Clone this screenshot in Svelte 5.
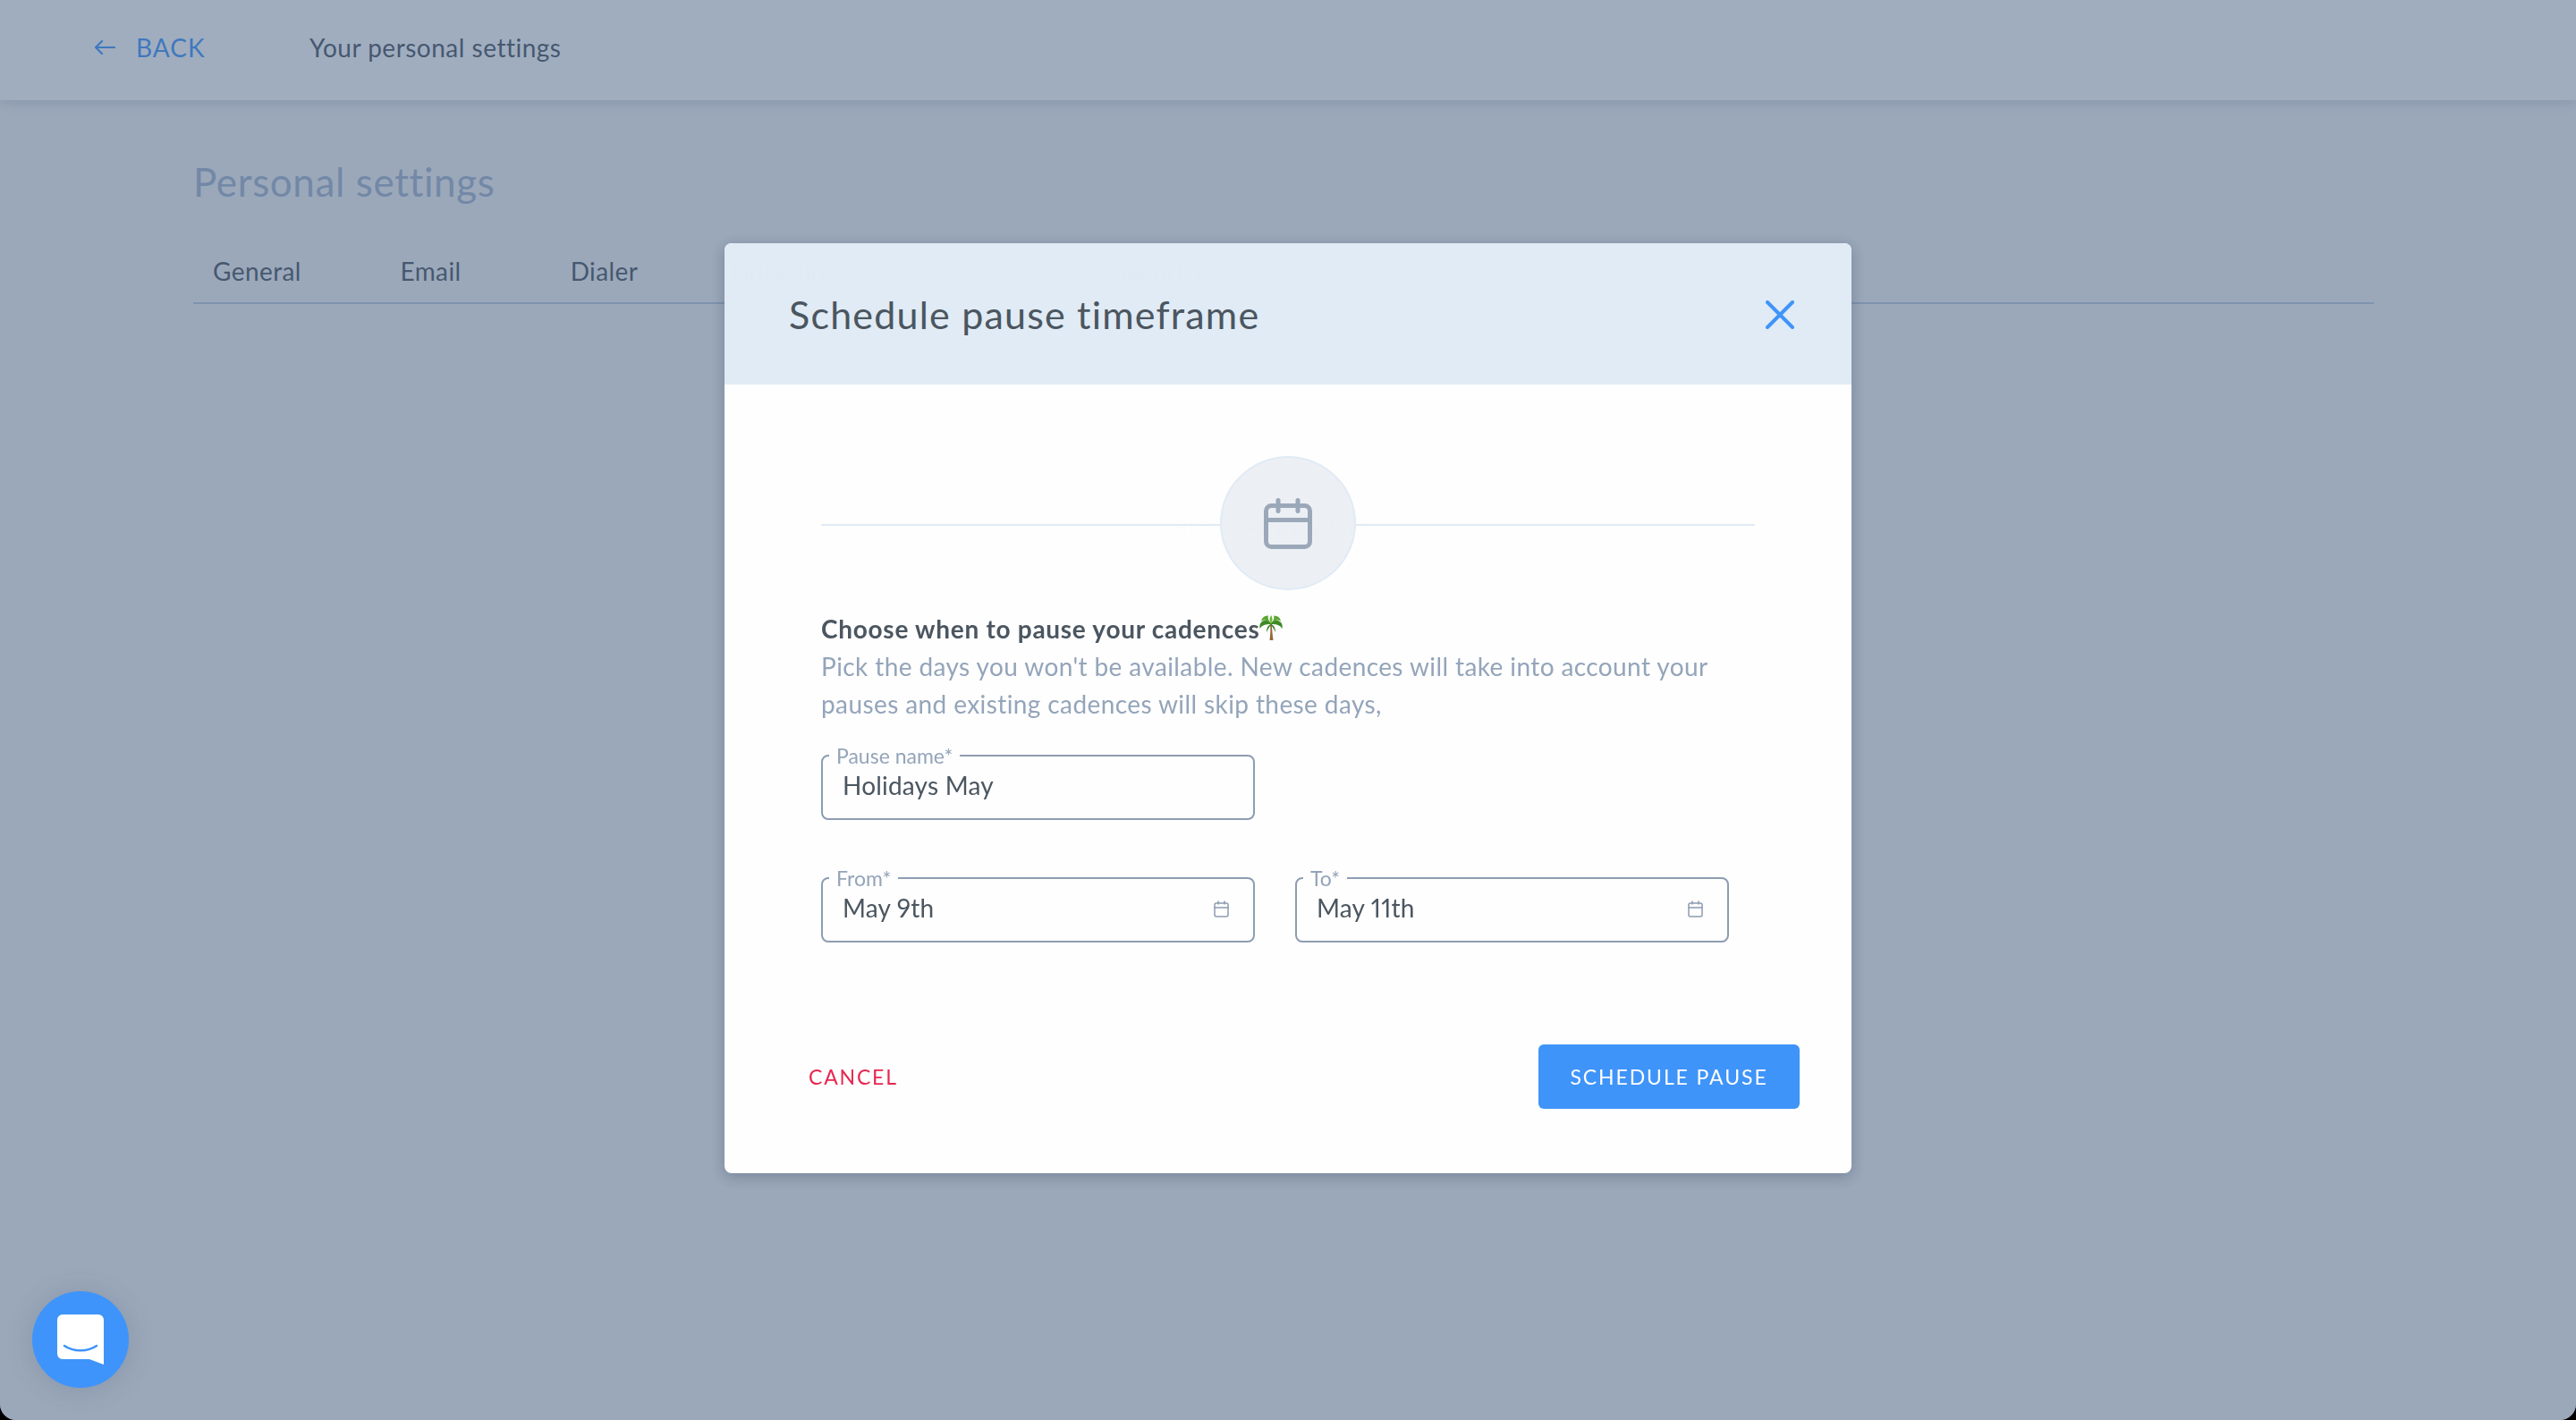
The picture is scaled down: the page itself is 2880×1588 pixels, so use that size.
<script>
  const tabs = ['General', 'Email', 'Dialer', 'Linkedin'];
</script>

<div class="page">
  <header class="topbar">
    <a class="back" href="#back">
      <svg class="back-arrow" viewBox="0 0 24 18" width="24" height="18" fill="none" stroke="currentColor" stroke-width="2.2" stroke-linecap="round" stroke-linejoin="round">
        <path d="M23 9H2M9 2 2 9l7 7" />
      </svg>
      BACK
    </a>
    <span class="crumb">Your personal settings</span>
  </header>

  <main class="content">
    <h1>Personal settings</h1>
    <nav class="tabs">
      {#each tabs as tab}
        <span class="tab">{tab}</span>
      {/each}
      <span class="tab security">Security</span>
    </nav>
    <div class="past">HIDE PAST PAUSES</div>
  </main>

  <div class="overlay">
    <section class="modal">
      <div class="modal-head">
        <h2>Schedule pause timeframe</h2>
        <svg class="close" viewBox="0 0 32 32" width="32" height="32" fill="none" stroke="#3e94fa" stroke-width="4" stroke-linecap="round">
          <path d="M2 2l28 28M30 2 2 30" />
        </svg>
      </div>

      <div class="modal-body">
        <div class="divider">
          <span class="rule"></span>
          <span class="badge">
            <svg viewBox="0 0 54 57" width="54" height="57" fill="none" stroke="#9ba8ba" stroke-width="5" stroke-linecap="round" stroke-linejoin="round">
              <rect x="2.5" y="8.5" width="49" height="46" rx="6" />
              <path d="M2.5 24.5h49M16 2.5v12M38 2.5v12" />
            </svg>
          </span>
          <span class="rule"></span>
        </div>

        <p class="lead">Choose when to pause your cadences<svg class="palm" viewBox="0 0 26 28" width="26" height="28">
            <path d="M12 9c.6 6 .4 12-.5 19h4c-1-7-1.500-13-1.500-19z" fill="#94683a" />
            <path d="M13 9C10 5 5 5 2 8c-1.500 1.500-2 4-1.500 7C3 11 7 10 13 10z" fill="#3f8a25" />
            <path d="M13 9c3-4 8-4 11-1 1.500 1.500 2 4 1.500 7C23 11 19 10 13 10z" fill="#3f8a25" />
            <path d="M13 9C10 6 9 3 10 .5c-4 0-7 2-8 6 4-2 7-1 11 3z" fill="#5aa630" />
            <path d="M13 9c3-3 4-6 3-8.500 4 0 7 2 8 6-4-2-7-1-11 3z" fill="#5aa630" />
            <path d="M13 10c-3 1-5 4-5 9 2-4 3-6 5-8 2 2 3 4 5 8 0-5-2-8-5-9z" fill="#2f7a1f" />
            <path d="M13 9c-2-3-2-6 0-9 2 3 2 6 0 9z" fill="#6cb93a" />
          </svg></p>
        <p class="hint">Pick the days you won't be available. New cadences will take into account your pauses and existing cadences will skip these days,</p>

        <fieldset class="field name">
          <legend>Pause name*</legend>
          <span class="value">Holidays May</span>
        </fieldset>

        <div class="dates">
          <fieldset class="field">
            <legend>From*</legend>
            <span class="value">May 9th</span>
            {@render cal()}
          </fieldset>
          <fieldset class="field">
            <legend>To*</legend>
            <span class="value">May 11th</span>
            {@render cal()}
          </fieldset>
        </div>

        <div class="actions">
          <button class="cancel">CANCEL</button>
          <button class="submit">SCHEDULE PAUSE</button>
        </div>
      </div>
    </section>
  </div>

  <button class="chat" aria-label="Chat">
    <svg viewBox="0 0 52 56" width="52" height="56">
      <path d="M6 0h40a6 6 0 0 1 6 6v50l-16-6H6a6 6 0 0 1-6-6V6a6 6 0 0 1 6-6z" fill="#fff" />
      <path d="M8 35c10 7 26 7 36 0" fill="none" stroke="#3e94fa" stroke-width="2.600" stroke-linecap="round" />
    </svg>
  </button>
</div>

{#snippet cal()}
  <svg class="cal" viewBox="0 0 17 19" width="17" height="19" fill="none" stroke="#8d9db3" stroke-width="1.500" stroke-linecap="round">
    <rect x="1" y="3" width="15" height="15" rx="2" />
    <path d="M1 8h15M5 1v3M12 1v3" />
  </svg>
{/snippet}

<style>
  :global(body) {
    margin: 0;
    background: #000;
    font-family: Lato, "Open Sans", sans-serif;
    font-variant-numeric: proportional-nums;
  }

  .page {
    position: relative;
    height: 1588px;
    overflow: hidden;
    background: #f5f5f5;
    border-radius: 0 0 18px 18px;
    color: #4a5560;
  }

  .topbar {
    display: flex;
    align-items: center;
    height: 112px;
    padding: 0 0 6px 105px;
    background: #fff;
    box-shadow: 0 2px 14px rgba(40, 60, 90, 0.22);
    box-sizing: border-box;
  }

  .back {
    display: flex;
    align-items: center;
    gap: 23px;
    width: 241px;
    color: #3e94fa;
    font-size: 28px;
    letter-spacing: 1px;
    text-decoration: none;
  }

  .crumb {
    font-size: 28px;
    letter-spacing: 0.5px;
  }

  .content {
    padding: 0 226px 0 216px;
  }

  h1 {
    margin: 59px 0 0;
    font-size: 44px;
    line-height: 64px;
    font-weight: 400;
    letter-spacing: 0.6px;
    color: #a3b5cd;
  }

  .tabs {
    display: flex;
    gap: 51px;
    margin-top: 46px;
    height: 59px;
    border-bottom: 2px solid #bdcbdd;
    font-size: 28px;
    line-height: 44px;
    letter-spacing: 0.4px;
    box-sizing: border-box;
  }

  .tab {
    width: 143px;
    text-align: center;
  }

  .security {
    margin-left: 233px;
  }

  .past {
    margin: 236px 0 0 1094px;
    font-size: 22px;
    letter-spacing: 2px;
  }

  .overlay {
    position: absolute;
    inset: 0;
    display: flex;
    align-items: center;
    justify-content: center;
    padding-bottom: 4px;
    box-sizing: border-box;
    background: rgba(65, 91, 127, 0.5);
  }

  .modal {
    width: 1260px;
    background: #fff;
    border-radius: 8px;
    box-shadow: 0 4px 16px rgba(40, 55, 80, 0.3);
    opacity: 0.99;
    overflow: hidden;
  }

  .modal-head {
    display: flex;
    align-items: center;
    justify-content: space-between;
    height: 158px;
    padding: 0 64px 0 72px;
    background: #e1ecf6;
  }

  h2 {
    margin: 0;
    font-size: 43px;
    font-weight: 400;
    letter-spacing: 1.2px;
  }

  .close {
    margin-top: 2px;
  }

  .modal-body {
    padding: 80px 108px 72px;
  }

  .divider {
    display: flex;
    align-items: center;
  }

  .rule {
    flex: 1;
    height: 2px;
    margin-top: 4px;
    background: #e1ecf6;
  }

  .badge {
    display: flex;
    align-items: center;
    justify-content: center;
    width: 152px;
    height: 150px;
    border: 2px solid #e1ecf6;
    border-radius: 50%;
    background: #edf1f6;
    box-sizing: border-box;
  }

  .lead {
    margin: 22px 0 0;
    font-size: 28px;
    line-height: 42px;
    font-weight: 700;
    letter-spacing: 0.72px;
  }

  .palm {
    vertical-align: -2px;
  }

  .hint {
    margin: 0;
    font-size: 28px;
    line-height: 42px;
    letter-spacing: 0.4px;
    color: #94a5bb;
  }

  .field {
    display: flex;
    align-items: flex-start;
    justify-content: space-between;
    width: 485px;
    height: 85px;
    margin: 0;
    padding: 0 27px 0 22px;
    border: 2px solid #8d9db3;
    border-radius: 8px;
    box-sizing: border-box;
    min-width: 0;
  }

  .field.name {
    margin-top: 24px;
  }

  legend {
    margin-left: -15px;
    padding: 0 8px;
    font-size: 23px;
    line-height: 26px;
    color: #94a5bb;
  }

  .value {
    font-size: 28px;
    line-height: 40px;
    letter-spacing: 0.2px;
  }

  .dates {
    display: flex;
    gap: 45px;
    margin-top: 52px;
  }

  .cal {
    display: block;
    margin-top: 12px;
  }

  .actions {
    display: flex;
    align-items: center;
    justify-content: space-between;
    margin: 114px -50px 0 -14px;
  }

  button {
    font-family: inherit;
    border: none;
    cursor: pointer;
  }

  .cancel {
    padding: 0;
    background: none;
    color: #e8264f;
    font-size: 23px;
    letter-spacing: 1.8px;
  }

  .submit {
    width: 292px;
    height: 72px;
    border-radius: 6px;
    background: #3e94fa;
    color: #fff;
    font-size: 23px;
    letter-spacing: 1.9px;
  }

  .chat {
    position: absolute;
    left: 36px;
    bottom: 36px;
    display: flex;
    align-items: center;
    justify-content: center;
    width: 108px;
    height: 108px;
    padding: 0;
    border-radius: 50%;
    background: #3e94fa;
    box-shadow: 0 2px 30px rgba(50, 70, 100, 0.18);
  }
</style>
